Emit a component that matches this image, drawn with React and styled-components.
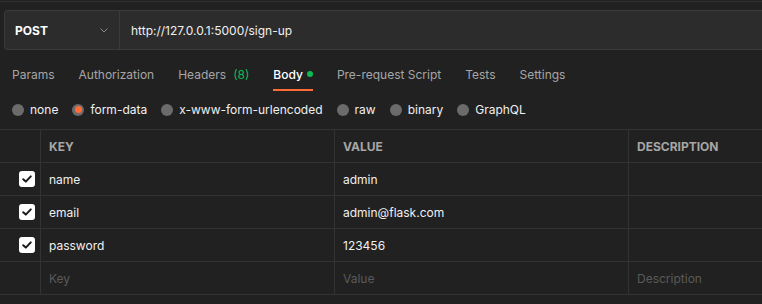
import React from "react";
import styled, { createGlobalStyle } from "styled-components";

const Global = createGlobalStyle`
  html, body { margin: 0; padding: 0; background: #212121; }
  body { font-family: Inter, "Noto Sans", sans-serif; color: #fff; overflow: hidden; }
`;

const Page = styled.div`
  width: 762px;
  height: 304px;
  background: #212121;
  border-top: 1px solid transparent;
  box-sizing: border-box;
  position: relative;
`;

const TopRule = styled.div`
  height: 1px;
  background: #303030;
`;

const RequestBar = styled.div`
  display: flex;
  margin: 8px 0 0 4px;
  height: 40px;
  box-sizing: border-box;
  border: 1px solid #3a3a3a;
  border-right: none;
  border-radius: 4px 0 0 4px;
  background: #2c2c2c;
`;

const Method = styled.div`
  width: 115px;
  display: flex;
  align-items: center;
  justify-content: space-between;
  padding: 0 10px 0 10px;
  box-sizing: border-box;
  border-right: 1px solid #3a3a3a;
  font-weight: 700;
  font-size: 12px;
  color: #fff;
`;

const Url = styled.div`
  flex: 1;
  display: flex;
  align-items: center;
  padding-left: 11px;
  font-size: 12px;
  color: #f0f0f0;
`;

const Tabs = styled.div`
  display: flex;
  gap: 24px;
  padding: 0 12px;
  margin-top: 9px;
  height: 32px;
`;

const Tab = styled.div`
  font-size: 12px;
  display: flex;
  align-items: center;
  gap: 4px;
  height: 30px;
  color: ${(p) => (p.$active ? "#ffffff" : "#a6a6a6")};
  font-weight: ${(p) => (p.$active ? 500 : 400)};
  border-bottom: 2px solid ${(p) => (p.$active ? "#ff6c37" : "transparent")};
`;

const Green = styled.span`
  color: #0cbb52;
  margin-left: 3px;
`;

const Dot = styled.span`
  width: 6px;
  height: 6px;
  border-radius: 50%;
  background: #0cbb52;
  display: inline-block;
`;

const Radios = styled.div`
  display: flex;
  align-items: center;
  gap: 14px;
  padding: 0 12px;
  height: 37px;
`;

const RadioItem = styled.label`
  display: flex;
  align-items: center;
  gap: 6px;
  font-size: 12px;
  color: #f0f0f0;
`;

const RadioCircle = styled.span`
  width: 12px;
  height: 12px;
  border-radius: 50%;
  background: #6b6b6b;
  display: flex;
  align-items: center;
  justify-content: center;
  &::after {
    content: "";
    width: 7px;
    height: 7px;
    border-radius: 50%;
    background: ${(p) => (p.$checked ? "#ff6c37" : "transparent")};
  }
`;

const Table = styled.div`
  margin-top: 1px;
  border-top: 1px solid #333;
`;

const Row = styled.div`
  display: grid;
  grid-template-columns: 40px 294px 294px 1fr;
  height: 33px;
  border-bottom: 1px solid #333;
  box-sizing: border-box;
`;

const Cell = styled.div`
  display: flex;
  align-items: center;
  padding-left: 8px;
  border-left: 1px solid #333;
  font-size: 12px;
  font-weight: ${(p) => (p.$head ? 700 : 400)};
  color: ${(p) => (p.$head ? "#a6a6a6" : p.$placeholder ? "#5a5a5a" : "#f0f0f0")};
  white-space: nowrap;
  overflow: hidden;
`;

const CheckCell = styled.div`
  display: flex;
  align-items: center;
  justify-content: flex-end;
  padding-right: 5px;
`;

const Check = styled.span`
  width: 16px;
  height: 16px;
  border-radius: 3px;
  background: #fff;
  display: flex;
  align-items: center;
  justify-content: center;
`;

const Chevron = () => (
  <svg width="10" height="10" viewBox="0 0 10 10" fill="none">
    <path d="M1.5 3.5 L5 7 L8.5 3.5" stroke="#8a8a8a" strokeWidth="1" />
  </svg>
);

const Tick = () => (
  <svg width="12" height="12" viewBox="0 0 12 12" fill="none">
    <path d="M2.2 6.2 L4.8 8.6 L9.8 3.4" stroke="#1a1a1a" strokeWidth="2" strokeLinecap="round" strokeLinejoin="round" />
  </svg>
);

const tabs = ["Params", "Authorization", "Headers", "Body", "Pre-request Script", "Tests", "Settings"];
const radios = ["none", "form-data", "x-www-form-urlencoded", "raw", "binary", "GraphQL"];
const rows = [
  ["name", "admin"],
  ["email", "admin@flask.com"],
  ["password", "123456"],
];

export default function App() {
  return (
    <>
      <Global />
      <Page>
        <TopRule />
        <RequestBar>
          <Method>
            POST
            <Chevron />
          </Method>
          <Url>http://127.0.0.1:5000/sign-up</Url>
        </RequestBar>
        <Tabs>
          {tabs.map((t) => (
            <Tab key={t} $active={t === "Body"}>
              {t === "Headers" ? (
                <>
                  Headers<Green>(8)</Green>
                </>
              ) : (
                t
              )}
              {t === "Body" && <Dot />}
            </Tab>
          ))}
        </Tabs>
        <Radios>
          {radios.map((r) => (
            <RadioItem key={r}>
              <RadioCircle $checked={r === "form-data"} />
              {r}
            </RadioItem>
          ))}
        </Radios>
        <Table>
          <Row>
            <CheckCell />
            <Cell $head>KEY</Cell>
            <Cell $head>VALUE</Cell>
            <Cell $head>DESCRIPTION</Cell>
          </Row>
          {rows.map(([k, v]) => (
            <Row key={k}>
              <CheckCell>
                <Check>
                  <Tick />
                </Check>
              </CheckCell>
              <Cell>{k}</Cell>
              <Cell>{v}</Cell>
              <Cell />
            </Row>
          ))}
          <Row>
            <CheckCell />
            <Cell $placeholder>Key</Cell>
            <Cell $placeholder>Value</Cell>
            <Cell $placeholder>Description</Cell>
          </Row>
        </Table>
      </Page>
    </>
  );
}
